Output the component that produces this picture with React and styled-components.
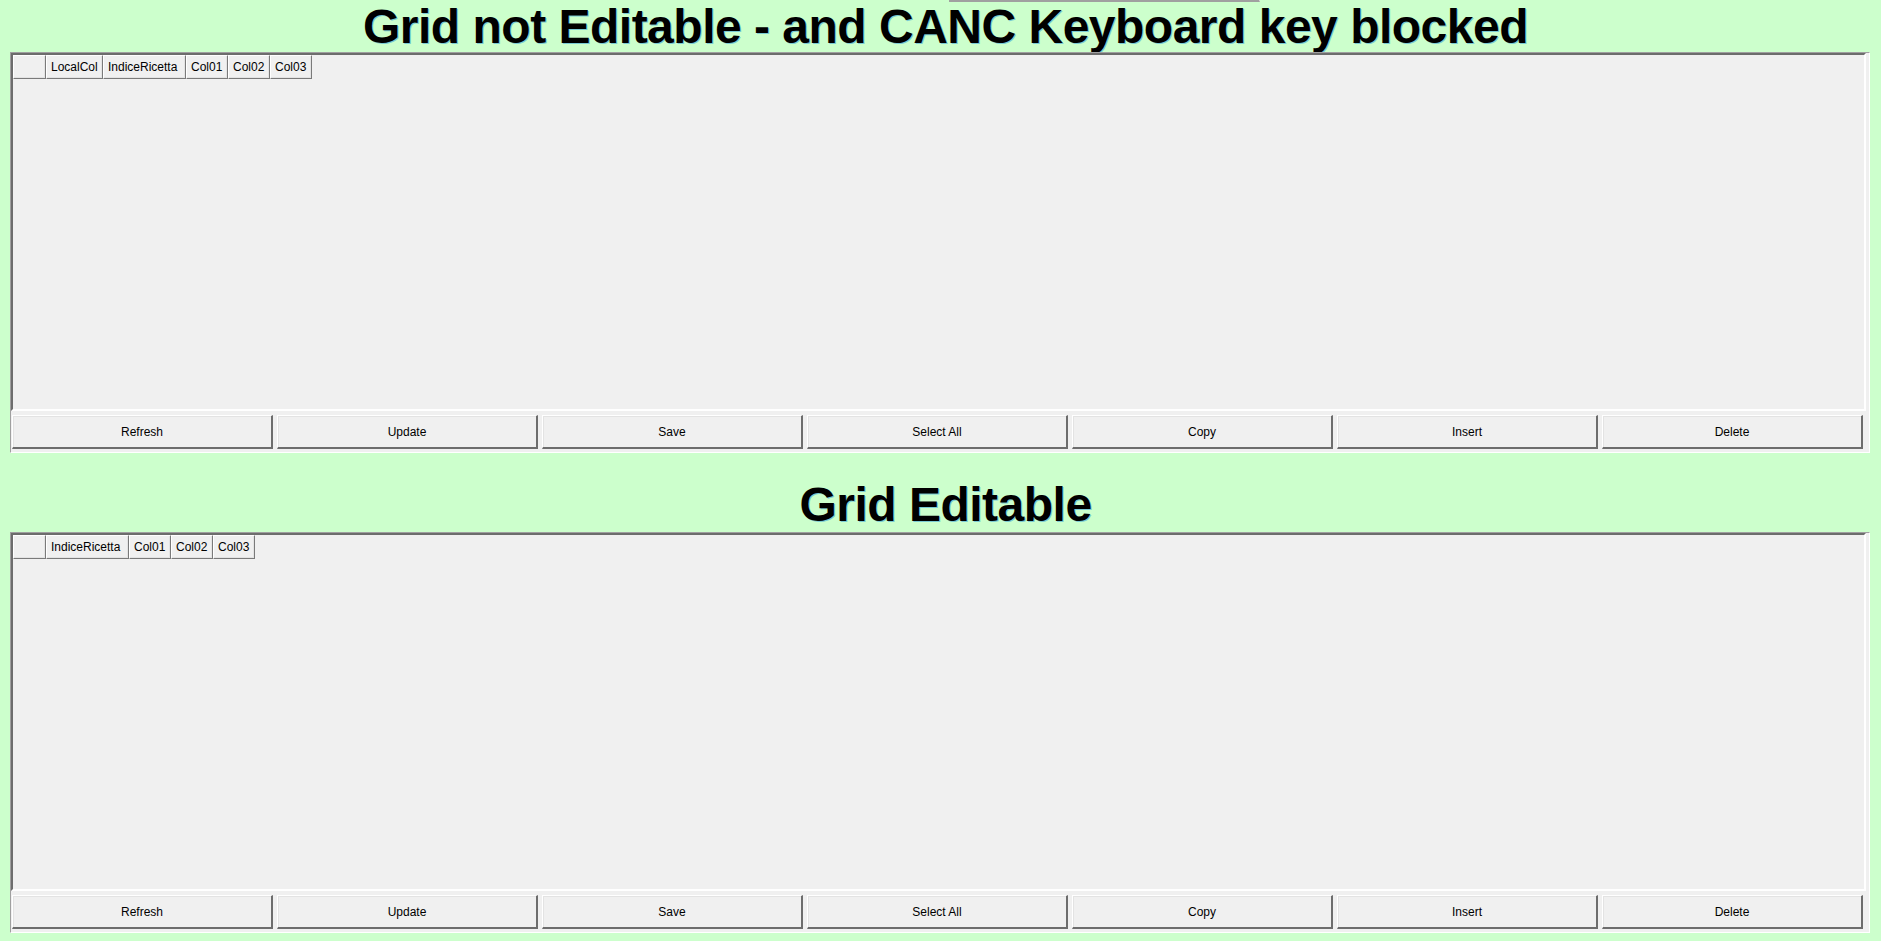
import React from "react";
import styled, { createGlobalStyle } from "styled-components";

const GlobalStyle = createGlobalStyle`
  html, body {
    margin: 0;
    padding: 0;
    background-color: #ccffcc;
    font-family: "Liberation Sans", Arial, sans-serif;
  }
`;

const Page = styled.div`
  display: flex;
  flex-direction: column;
  min-height: 941px;
  background-color: #ccffcc;
`;

const TopStub = styled.div`
  width: 310px;
  height: 0;
  margin-left: 949px;
  border-bottom: 2px solid #a0a0a0;
  border-right: 1px solid #e8e8e8;
`;

const Section = styled.section`
  display: flex;
  flex-direction: column;
  margin-top: ${(p) => p.$top || 0}px;
`;

const Title = styled.h1`
  margin: 0;
  padding: 0 0 ${(p) => p.$lift || 0}px 10px;
  text-align: center;
  font-family: "Liberation Sans", Arial, sans-serif;
  font-weight: 700;
  font-size: 48px;
  letter-spacing: -0.5px;
  line-height: 50px;
  color: #000;
  text-shadow: 1px 1px 0 rgba(40, 150, 220, 0.5);
`;

const Panel = styled.div`
  display: flex;
  flex-direction: column;
  margin: 0 11px 0 10px;
  padding: 0 3px 3px 0;
  background-color: #f0f0f0;
  border: 1px solid;
  border-color: #a0a0a0 #ffffff #ffffff #a0a0a0;
`;

const Grid = styled.div`
  box-sizing: border-box;
  height: 358px;
  background-color: #f0f0f0;
  border: 2px solid;
  border-color: #6d6d6d #ffffff #ffffff #6d6d6d;
`;

const HeaderRow = styled.div`
  display: flex;
`;

const HeaderCell = styled.div`
  box-sizing: border-box;
  height: 24px;
  width: ${(p) => p.$width}px;
  padding: 0 4px;
  border: 1px solid;
  border-color: #ffffff #7a7a7a #7a7a7a #ffffff;
  box-shadow: inset -1px -1px 0 #e3e3e3;
  font-size: 12px;
  line-height: 22px;
  color: #000;
  white-space: nowrap;
`;

const ButtonRow = styled.div`
  display: grid;
  grid-template-columns: repeat(7, 1fr);
  gap: 4px;
  padding: 4px 3px 0 1px;
`;

const Button = styled.button`
  box-sizing: border-box;
  height: 34px;
  margin: 0;
  padding: 0;
  background-color: #f0f0f0;
  border-style: solid;
  border-width: 1px 2px 2px 1px;
  border-color: #ffffff #6d6d6d #6d6d6d #ffffff;
  box-shadow: inset 1px 1px 0 #e3e3e3;
  font-family: "Liberation Sans", Arial, sans-serif;
  font-size: 12px;
  color: #000;
  cursor: pointer;
`;

const actions = ["Refresh", "Update", "Save", "Select All", "Copy", "Insert", "Delete"];

const colWidths = {
  LocalCol: 57,
  IndiceRicetta: 83,
  Col01: 42,
  Col02: 42,
  Col03: 42,
};

const GridBlock = ({ title, top, lift, columns }) => (
  <Section $top={top}>
    <Title $lift={lift}>{title}</Title>
    <Panel>
      <Grid>
        <HeaderRow>
          <HeaderCell $width={33} />
          {columns.map((c) => (
            <HeaderCell key={c} $width={colWidths[c]}>
              {c}
            </HeaderCell>
          ))}
        </HeaderRow>
      </Grid>
      <ButtonRow>
        {actions.map((a) => (
          <Button key={a}>{a}</Button>
        ))}
      </ButtonRow>
    </Panel>
  </Section>
);

const App = () => {
  return (
    <>
      <GlobalStyle />
      <Page>
        <TopStub />
        <GridBlock
          title="Grid not Editable - and CANC Keyboard key blocked"
          columns={["LocalCol", "IndiceRicetta", "Col01", "Col02", "Col03"]}
        />
        <GridBlock
          title="Grid Editable"
          top={27}
          lift={2}
          columns={["IndiceRicetta", "Col01", "Col02", "Col03"]}
        />
      </Page>
    </>
  );
};

export default App;
